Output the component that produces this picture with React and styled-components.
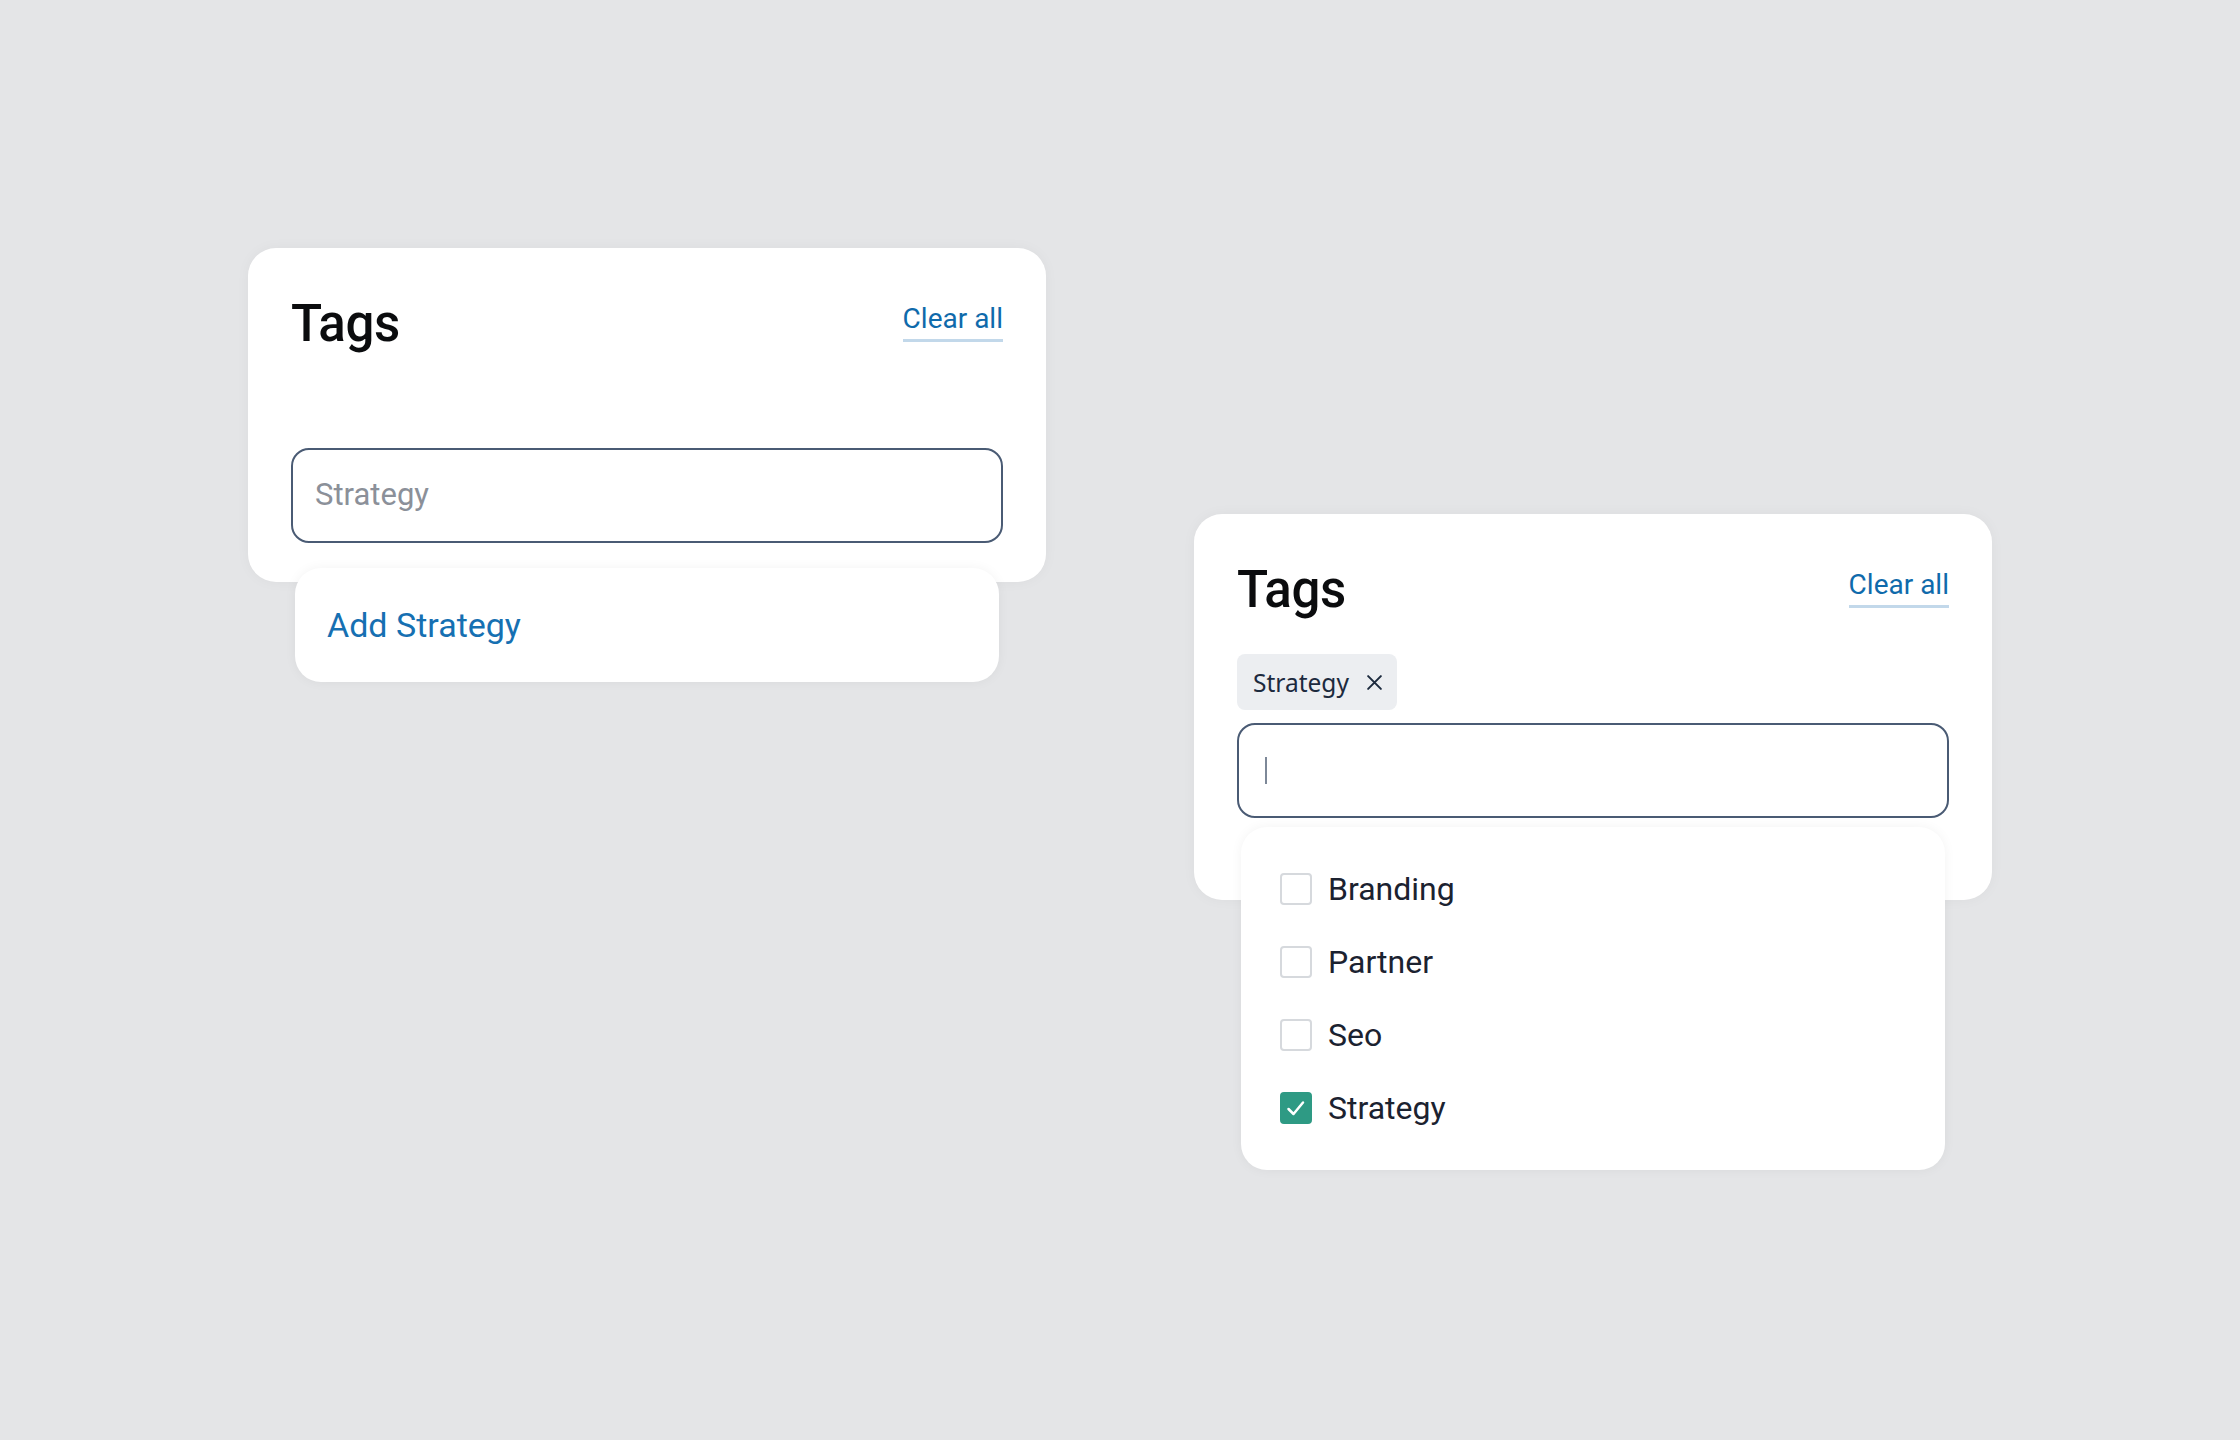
import React from 'react';
import styled, { createGlobalStyle } from 'styled-components';

const GlobalStyle = createGlobalStyle`
  html, body {
    margin: 0;
    padding: 0;
    background: #e4e5e7;
  }
  body {
    font-family: Roboto, "Liberation Sans", Arial, sans-serif;
  }
`;

const Page = styled.div`
  min-height: 100vh;
  box-sizing: border-box;
  padding: 248px 0 0 248px;
  display: flex;
  align-items: flex-start;
  gap: 148px;
`;

const Card = styled.div`
  width: 798px;
  box-sizing: border-box;
  margin-top: ${props => props.$offset || 0}px;
  padding: 51px 43px ${props => props.$padBottom}px;
  background: #fff;
  border-radius: 28px;
  box-shadow: 0 0 14px rgba(0, 0, 0, 0.04);
`;

const Header = styled.div`
  display: flex;
  justify-content: space-between;
  align-items: flex-start;
`;

const Title = styled.h2`
  margin: 0;
  font-size: 51px;
  line-height: 50px;
  font-weight: 500;
  letter-spacing: -0.4px;
  color: #0b0c0e;
`;

const ClearAll = styled.a`
  margin-top: 6px;
  padding-bottom: 6px;
  font-size: 28px;
  line-height: 28px;
  color: #0f6aab;
  text-decoration: none;
  border-bottom: 3px solid #c2d8ea;
  cursor: pointer;
`;

const TagList = styled.div`
  margin-top: 39px;
  min-height: 47px;
  display: flex;
  flex-wrap: wrap;
  gap: 10px;
`;

const Chip = styled.span`
  height: 56px;
  box-sizing: border-box;
  display: inline-flex;
  align-items: center;
  gap: 17px;
  padding: 0 14px 0 16px;
  background: #eceef1;
  border-radius: 8px;
  font-family: "Noto Sans", "Open Sans", sans-serif;
  font-size: 24.5px;
  color: #1c2a3e;
`;

const ChipRemove = styled.svg`
  width: 17px;
  height: 17px;
  margin-top: 1px;
`;

const Field = styled.div`
  position: relative;
  margin-top: 13px;
`;

const InputBox = styled.div`
  height: 95px;
  box-sizing: border-box;
  display: flex;
  align-items: center;
  padding: 0 22px;
  border: 2px solid #4a5b74;
  border-radius: 18px;
  background: #fff;
`;

const Placeholder = styled.span`
  font-size: 31px;
  color: #8b9099;
  padding-bottom: 2px;
`;

const Caret = styled.span`
  display: block;
  width: 2px;
  height: 27px;
  margin-left: 4px;
  background: #7d8898;
`;

const Menu = styled.div`
  position: absolute;
  top: calc(100% + ${props => props.$gap}px);
  left: 4px;
  right: 4px;
  background: #fff;
  border-radius: 26px;
  box-shadow: 0 0 12px rgba(0, 0, 0, 0.05);
  z-index: 10;
`;

const AddItem = styled.div`
  height: 114px;
  display: flex;
  align-items: center;
  padding-left: 32px;
  font-size: 34px;
  color: #1670b2;
  cursor: pointer;
`;

const OptionList = styled.div`
  display: flex;
  flex-direction: column;
  gap: 41px;
  padding: 46px 39px;
`;

const Option = styled.label`
  display: flex;
  align-items: center;
  gap: 16px;
  height: 32px;
  font-size: 32px;
  color: #1b2230;
  cursor: pointer;
`;

const Box = styled.span`
  width: 32px;
  height: 32px;
  box-sizing: border-box;
  flex-shrink: 0;
  display: flex;
  align-items: center;
  justify-content: center;
  border-radius: 4px;
  border: 2px solid ${props => (props.$checked ? '#2e9a84' : '#d6d9dd')};
  background: ${props => (props.$checked ? '#2e9a84' : '#fff')};
`;

const CheckMark = () => (
  <svg width="28" height="28" viewBox="0 0 28 28" fill="none">
    <path d="M6.5 15 L11.5 20 L21 8.5" stroke="#fff" strokeWidth="2.5" strokeLinecap="round" strokeLinejoin="round" />
  </svg>
);

const options = [
  { label: 'Branding', checked: false },
  { label: 'Partner', checked: false },
  { label: 'Seo', checked: false },
  { label: 'Strategy', checked: true },
];

const App = () => {
  return (
    <>
      <GlobalStyle />
      <Page>
        {/* typing a new tag */}
        <Card $padBottom={39}>
          <Header>
            <Title>Tags</Title>
            <ClearAll>Clear all</ClearAll>
          </Header>
          <TagList />
          <Field>
            <InputBox>
              <Placeholder>Strategy</Placeholder>
            </InputBox>
            <Menu $gap={25}>
              <AddItem>Add Strategy</AddItem>
            </Menu>
          </Field>
        </Card>

        {/* picking from existing tags */}
        <Card $offset={266} $padBottom={82}>
          <Header>
            <Title>Tags</Title>
            <ClearAll>Clear all</ClearAll>
          </Header>
          <TagList>
            <Chip>
              Strategy
              <ChipRemove viewBox="0 0 16 16" fill="none">
                <path d="M2 2 L14 14 M14 2 L2 14" stroke="#1c2a3e" strokeWidth="1.9" strokeLinecap="round" />
              </ChipRemove>
            </Chip>
          </TagList>
          <Field>
            <InputBox>
              <Caret />
            </InputBox>
            <Menu $gap={9}>
              <OptionList>
                {options.map(opt => (
                  <Option key={opt.label}>
                    <Box $checked={opt.checked}>{opt.checked && <CheckMark />}</Box>
                    {opt.label}
                  </Option>
                ))}
              </OptionList>
            </Menu>
          </Field>
        </Card>
      </Page>
    </>
  );
};

export default App;
